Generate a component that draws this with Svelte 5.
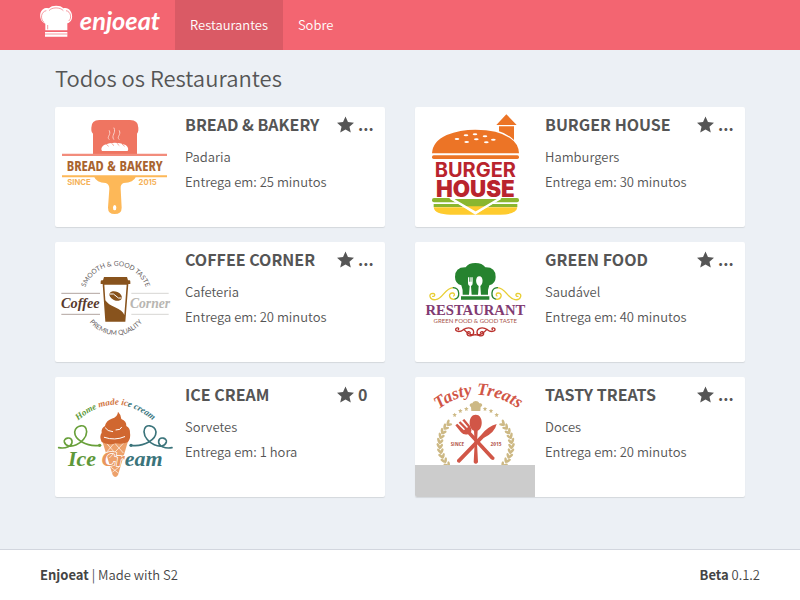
<script>
  const navigation = [
    { label: 'Restaurantes', href: '#restaurants', active: true },
    { label: 'Sobre', href: '#about', active: false }
  ];

  const restaurants = [
    { id: 'bread', name: 'BREAD & BAKERY', category: 'Padaria', delivery: '25 minutos', rating: '...' },
    { id: 'burger', name: 'BURGER HOUSE', category: 'Hamburgers', delivery: '30 minutos', rating: '...' },
    { id: 'coffee', name: 'COFFEE CORNER', category: 'Cafeteria', delivery: '20 minutos', rating: '...' },
    { id: 'green', name: 'GREEN FOOD', category: 'Saudável', delivery: '40 minutos', rating: '...' },
    { id: 'ice', name: 'ICE CREAM', category: 'Sorvetes', delivery: '1 hora', rating: '0' },
    { id: 'tasty', name: 'TASTY TREATS', category: 'Doces', delivery: '20 minutos', rating: '...' }
  ];

  // Leaves along the left half of the laurel: x, y, rotation
  const leaves = [
    [117, 143, 48], [107, 154, 40], [99, 167, 30], [93, 181, 20], [89, 196, 10],
    [88, 211, 0], [90, 226, -10], [94, 241, -20], [101, 255, -30], [110, 268, -40]
  ];
  const stars = [[134, 119], [151, 107], [169, 101], [225, 101], [243, 107], [260, 119]];
</script>

{#snippet bread()}
  <svg viewBox="15 21 360 360" role="img" aria-label="Bread & Bakery">
    <path fill="#ef7561" d="M129 165V101q-5-4-5-10v-8q0-23 24-23h92q25 0 25 23v8q0 6-4 10v64z" />
    <path fill="#fff" d="M156 153q-6-9 6-18 32-14 65 0 11 9 6 18z" />
    <g fill="none" stroke="#fbd0c8" stroke-width="3" stroke-linecap="round">
      <path d="M177 115c-9-8 8-13 1-26M191 115c-9-12 9-19 1-34M207 115c-9-8 8-13 1-26" transform="translate(0 3)" />
    </g>
    <path fill="none" stroke="#ef7561" stroke-width="2" d="M169 133l7 6M184 129l8 8M200 129l8 8M216 132l8 7" />
    <path fill="#f28c7c" d="M36 161h315v7H36z" />
    <path fill="#fdb858" d="M36 226h315v6H36zM132 230h126q-7 17-37 19-10 3-9 17l3 57q0 19-21 19-20 0-20-19l4-57q0-13-11-17-28-2-35-19z" />
    <ellipse cx="194" cy="323" rx="5" ry="8" fill="#fff" />
    <text x="194" y="214" font-size="44" class="narrow" fill="#a9642f">BREAD &amp; BAKERY</text>
    <text x="87" y="256" font-size="23" class="wide" fill="#f5b158">SINCE</text>
    <text x="293" y="256" font-size="23" class="wide" fill="#f5b158">2015</text>
  </svg>
{/snippet}

{#snippet burger()}
  <svg viewBox="15 21 360 360" role="img" aria-label="Burger House">
    <path fill="#ec7426" d="M289 43l31 32h-61zM267 79h45v41q-20-19-45-26zM66 160q2-36 44-55 40-16 86-16 68 0 104 25 26 17 27 46z" />
    <rect x="66" y="166" width="261" height="11" rx="5" fill="#ec7426" />
    <g fill="#fff">
      <ellipse cx="168" cy="106" rx="7" ry="3" /><ellipse cx="195" cy="103" rx="7" ry="3" />
      <ellipse cx="225" cy="109" rx="7" ry="3" /><ellipse cx="141" cy="117" rx="7" ry="3" />
      <ellipse cx="199" cy="118" rx="7" ry="3" /><ellipse cx="250" cy="119" rx="7" ry="3" />
      <ellipse cx="170" cy="126" rx="7" ry="3" /><ellipse cx="229" cy="127" rx="7" ry="3" />
    </g>
    <text fill="#b9242d"><tspan x="196" y="230" font-size="60" class="wide">BURGER</tspan><tspan x="196" y="290" font-size="67" class="heavy">HOUSE</tspan></text>
    <rect x="66" y="294" width="261" height="13" rx="6" fill="#8ab62f" />
    <path fill="#8ab62f" d="M71 312h251v9H71z" />
    <path fill="#fecb2e" d="M71 322h251q-3 22-51 22H121q-47 0-50-22z" />
    <path fill="#fff" d="M116 293h160l-80 51z" />
    <path fill="#8ab62f" d="M132 297h132l-22 15-45 23-46-23z" />
    <path fill="#fecb2e" d="M160 319h73l-36 16z" />
    <path fill="none" stroke="#fff" stroke-width="7" d="M122 295l75 43 74-43" />
  </svg>
{/snippet}

{#snippet coffee()}
  <svg viewBox="15 6 360 360" role="img" aria-label="Coffee Corner">
    <defs>
      <path id="coffee-top" d="M106 143A96 96 0 0 1 288 143" />
      <path id="coffee-bottom" d="M105 220A99 99 0 0 0 291 220" />
    </defs>
    <text font-size="20" class="plain" fill="#67625f"><textPath href="#coffee-top" startOffset="50%">SMOOTH &amp; GOOD TASTE</textPath></text>
    <text font-size="20" class="plain" fill="#67625f"><textPath href="#coffee-bottom" startOffset="50%">PREMIUM QUALITY</textPath></text>
    <path fill="#88531d" d="M162 111h69l3 10h4q3 0 3 4v7h-89v-7q0-4 4-4h3zM158 132h77l-9 113h-60z" />
    <path fill="#fff" d="M163 134h67l-7 91q-5-13-28-23-20-8-29-21z" />
    <ellipse cx="197" cy="168" rx="20" ry="13" fill="#88531d" transform="rotate(25 197 168)" />
    <path fill="none" stroke="#fff" stroke-width="3" d="M179 162q13-3 19 6t17 6" />
    <g stroke-width="2">
      <path stroke="#8b7770" d="M34 160h116M34 223h116" />
      <path stroke="#c3c1bd" d="M244 160h112M244 223h112" />
    </g>
    <text x="91" y="203" font-size="43" class="script" fill="#593a2d">Coffee</text>
    <text x="300" y="203" font-size="41" class="script" fill="#b8b6b2">Corner</text>
  </svg>
{/snippet}

{#snippet green()}
  <svg viewBox="15 6 360 360" role="img" aria-label="Restaurant">
    <path fill="#26832f" d="M158 164q1-16-4-28-19-5-19-25 0-30 32-29 8-13 29-13t30 13q31-1 31 29 0 20-19 25-5 12-4 28zM153 169h85v10h-85z" />
    <g fill="#fff">
      <path d="M174 112h3v13h2v-13h3v13h2v-13h4v18q0 7-5 8l2 27h-8l2-27q-5-1-5-8z" />
      <path d="M208 109c13 0 12 25 3 29l2 27h-9l2-27c-10-4-11-29 2-29z" />
    </g>
    <g fill="none" stroke-width="4" stroke-linecap="round">
      <path stroke="#e8ce34" d="M68 169c7 2 9-8 1-9-16 0-10 22 8 19 23-4 27-35 53-36" />
      <path stroke="#26832f" d="M130 143c20 1 22 31 3 35" />
      <path stroke="#e8ce34" d="M133 178c-15 1-20-17-7-19 7-1 10 6 5 9" />
      <path stroke="#e8ce34" d="M324 169c-7 2-9-8-1-9 16 0 10 22-8 19-23-4-27-35-53-36" />
      <path stroke="#26832f" d="M262 143c-20 1-22 31-3 35" />
      <path stroke="#e8ce34" d="M259 178c15 1 20-17 7-19-7-1-10 6-5 9" />
      <path stroke="#b9302c" d="M145 269c4-7-6-7-8-2-1 10 15 9 23 2 13-9 30-6 31 7 1 12-17 16-20 6-1-8 8-9 10-3M247 269c-4-7 6-7 8-2 1 10-15 9-23 2-13-9-30-6-31 7-1 12 17 16 20 6 1-8-8-9-10-3" />
      <path stroke="#b9302c" d="M162 269q18 20 34 15 16 5 34-15" />
    </g>
    <text x="196" y="225" font-size="44" class="serif" fill="#813b72">RESTAURANT</text>
    <text x="196" y="249" font-size="18" class="plain" fill="#a65349">GREEN FOOD &amp; GOOD TASTE</text>
  </svg>
{/snippet}

{#snippet ice()}
  <svg viewBox="15 6 360 360" role="img" aria-label="Ice Cream">
    <defs>
      <path id="ice-top" d="M86 135Q196 43 306 135" />
      <linearGradient id="ice-ink">
        <stop offset="0" stop-color="#5e983a" /><stop offset=".28" stop-color="#5e983a" />
        <stop offset=".3" stop-color="#cf7240" /><stop offset=".64" stop-color="#cf7240" />
        <stop offset=".66" stop-color="#3b747b" /><stop offset="1" stop-color="#3b747b" />
      </linearGradient>
    </defs>
    <text font-size="27" class="script" fill="url(#ice-ink)"><textPath href="#ice-top" startOffset="50%">Home made ice cream</textPath></text>
    <path fill="#eda16b" d="M157 199h77l-30 101q-8 12-16 0z" />
    <path fill="none" stroke="#fff" stroke-width="2" d="M169 204l45 52M194 204l26 30M221 204l-43 45M193 204l-25 30M182 276l23 18M207 276l-20 16" />
    <path fill="#d06730" d="M155 201q-8-17 0-28-2-13 10-20 3-16 20-22 18-4 19-21 8 7 10 22 16 6 15 21 12 6 11 21 3 14-6 27-17 8-36 4-21 7-43-4z" />
    <path fill="none" stroke="#fff" stroke-width="3" stroke-linecap="round" d="M166 159q6 10 22 11M198 165q14 1 17-8M163 187q32 11 61-2" />
    <g fill="none" stroke-width="5" stroke-linecap="round">
      <path stroke="#69a03b" d="M26 218c21 4 42-5 40-20-3-15-26-9-23 3 8 28 66 4 67-31 0-27-34-20-36 1 0 22 33 45 75 40" />
      <path stroke="#3b747b" d="M366 218c-21 4-42-5-40-20 3-15 26-9 23 3-8 28-66 4-67-31 0-27 34-20 36 1 0 22-33 45-75 40" />
    </g>
    <circle cx="149" cy="211" r="5" fill="#69a03b" /><circle cx="243" cy="211" r="5" fill="#3b747b" />
    <text x="196" y="272" font-size="66" class="script outlined"><tspan fill="#5e983a">Ice&nbsp;</tspan><tspan fill="#e8965e">Cr</tspan><tspan fill="#3b747b">eam</tspan></text>
  </svg>
{/snippet}

{#snippet tasty()}
  <svg viewBox="15 6 360 360" role="img" aria-label="Tasty Treats">
    <defs><path id="tasty-top" d="M78 109Q198 12 334 106" /></defs>
    <text font-size="52" class="script" fill="#d15647"><textPath href="#tasty-top" startOffset="50%">Tasty Treats</textPath></text>
    <g fill="#cdb985">
      <path d="M184 108l-1-12c-7-3-4-12 4-11 4-9 17-9 21 0 9-2 12 8 4 11l-1 12z" />
      {#each stars as [x, y]}
        <path transform="translate({x} {y})" d="M0-6l2 4 5 1-4 3 1 5-4-2-4 2 1-5-4-3 5-1z" />
      {/each}
      {#each leaves as [x, y, turn]}
        <g transform="translate({x} {y}) rotate({turn})">
          <ellipse cx="-3" cy="0" rx="4" ry="9" transform="rotate(-30)" /><ellipse cx="6" cy="0" rx="4" ry="9" transform="rotate(35)" />
        </g>
        <g transform="translate({394 - x} {y}) rotate({-turn})">
          <ellipse cx="3" cy="0" rx="4" ry="9" transform="rotate(30)" /><ellipse cx="-6" cy="0" rx="4" ry="9" transform="rotate(-35)" />
        </g>
      {/each}
    </g>
    <g fill="#d15647">
      <path d="M197 119c24 0 23 43 6 48l-2 36 3 59q-7 9-13 0l3-59-2-36c-18-6-18-48 5-48z" />
      <path d="M136 151l6-5 20 20 3-3-19-20 5-4 20 20 3-3-17-20 6-4 18 22q5 11 2 18l71 76q-1 11-11 5l-69-75q-13 3-21-6z" />
      <path d="M260 147q-5 25-39 42l-72 74q-9 1-8-8l73-76q20-25 46-32z" />
    </g>
    <text x="142" y="212" font-size="18" class="narrow" fill="#b65a51">SINCE</text>
    <text x="258" y="212" font-size="18" class="narrow" fill="#b65a51">2015</text>
    <path fill="#ccc" d="M15 270h360v96H15z" />
  </svg>
{/snippet}

<div class="page">
  <header>
    <div class="container bar">
      <a class="brand" href="#home" aria-label="enjoeat">
        <svg viewBox="30 0 360 150" aria-hidden="true">
          <path fill="#fff" d="M46 91V71C25 64 25 27 48 24q5-1 9 1C65 15 92 15 100 25c24-6 34 28 20 40q-5 5-8 5v21zM45 96h67v14H45z" />
          <path fill="none" stroke="#f36571" stroke-width="2" d="M42 67C29 56 34 34 49 32M57 32c8-11 34-11 43 0M108 32c15 2 18 24 8 31M53 88V75M45 102h67" />
          <text x="270" y="91" font-size="76" class="word" fill="#fff">enjoeat</text>
        </svg>
      </a>
      <nav>
        {#each navigation as item}
          <a href={item.href} class:active={item.active} aria-current={item.active ? 'page' : undefined}>{item.label}</a>
        {/each}
      </nav>
    </div>
  </header>

  <main class="container">
    <h1>Todos os Restaurantes</h1>
    <div class="grid">
      {#each restaurants as item}
        <a class="card" href="#{item.id}">
          <div class="logo">
            {#if item.id === 'bread'}{@render bread()}
            {:else if item.id === 'burger'}{@render burger()}
            {:else if item.id === 'coffee'}{@render coffee()}
            {:else if item.id === 'green'}{@render green()}
            {:else if item.id === 'ice'}{@render ice()}
            {:else}{@render tasty()}{/if}
          </div>
          <div class="info">
            <div class="heading">
              <h2>{item.name}</h2>
              <span class="rating">
                <svg viewBox="0 0 18 18" aria-hidden="true"><path fill="currentColor" d="M9 0l2.6 5.8 6.4.7-4.8 4.3 1.4 6.2L9 13.8 3.4 17l1.4-6.2L0 6.5l6.4-.7z" /></svg>
                {item.rating}
              </span>
            </div>
            <p>{item.category}</p>
            <p>Entrega em: {item.delivery}</p>
          </div>
        </a>
      {/each}
    </div>
  </main>

  <footer>
    <div class="container foot">
      <span><strong>Enjoeat</strong> | Made with S2</span>
      <span><strong>Beta</strong> 0.1.2</span>
    </div>
  </footer>
</div>

<style>
  :global(body) {
    margin: 0;
  }

  .page {
    display: flex;
    flex-direction: column;
    min-height: 100vh;
    background: #ecf0f5;
    color: #555;
    font: 350 13px/20px 'Source Sans Pro', 'Noto Sans CJK SC', 'Noto Sans', sans-serif;
  }

  .container {
    box-sizing: border-box;
    width: 100%;
    max-width: 750px;
    margin: 0 auto;
    padding: 0 15px;
  }

  a {
    color: inherit;
    text-decoration: none;
  }

  header {
    background: #f36571;
    color: #fff;
  }

  .bar {
    display: flex;
    gap: 15px;
  }

  .brand svg {
    display: block;
    width: 120px;
    height: 50px;
  }

  nav {
    display: flex;
  }

  nav a {
    padding: 15px;
  }

  nav .active {
    background: rgba(0, 0, 0, 0.1);
  }

  main {
    flex: 1;
  }

  main.container {
    padding: 15px 30px;
  }

  h1 {
    margin: 0 0 18px;
    font-size: 22px;
    font-weight: 350;
    line-height: 24px;
  }

  .grid {
    display: grid;
    grid-template-columns: repeat(auto-fit, minmax(300px, 1fr));
    gap: 15px 30px;
  }

  .card {
    display: flex;
    min-height: 120px;
    overflow: hidden;
    border-radius: 2px;
    background: #fff;
    box-shadow: 0 1px 1px rgba(0, 0, 0, 0.1);
  }

  .logo {
    flex: none;
    width: 120px;
  }

  .logo svg {
    display: block;
    width: 120px;
    height: 120px;
  }

  .info {
    flex: 1;
    min-width: 0;
    padding: 5px 10px;
  }

  .heading {
    display: flex;
    justify-content: space-between;
    margin-bottom: 7px;
    font-size: 16px;
    font-weight: 700;
    line-height: 25px;
  }

  h2 {
    margin: 0;
    font-size: inherit;
    white-space: nowrap;
  }

  .rating {
    display: flex;
    gap: 4px;
    align-items: center;
    width: 38px;
  }

  .rating svg {
    flex: none;
    width: 17px;
    height: 18px;
  }

  p {
    margin: 0;
    line-height: 25px;
  }

  strong {
    font-weight: 700;
  }

  footer {
    border-top: 1px solid #d2d6de;
    background: #fff;
    color: #444;
  }

  .foot {
    display: flex;
    justify-content: space-between;
    padding: 15px;
  }

  text {
    text-anchor: middle;
  }

  .word {
    font-family: Lato, sans-serif;
    font-style: italic;
    font-weight: 700;
  }

  .narrow {
    font-family: 'Liberation Sans Narrow', 'Open Sans Condensed', 'DejaVu Sans Condensed', sans-serif;
    font-weight: 700;
  }

  .wide {
    font-family: Inter, sans-serif;
    font-weight: 700;
  }

  .heavy {
    font-family: Inter, sans-serif;
    font-weight: 900;
  }

  .plain {
    font-family: Lato, sans-serif;
    font-weight: 400;
  }

  .serif {
    font-family: 'Liberation Serif', serif;
    font-weight: 700;
  }

  .script {
    font-family: 'Liberation Serif', serif;
    font-style: italic;
    font-weight: 700;
  }

  .outlined {
    stroke: #fff;
    stroke-width: 4px;
    paint-order: stroke;
  }
</style>
